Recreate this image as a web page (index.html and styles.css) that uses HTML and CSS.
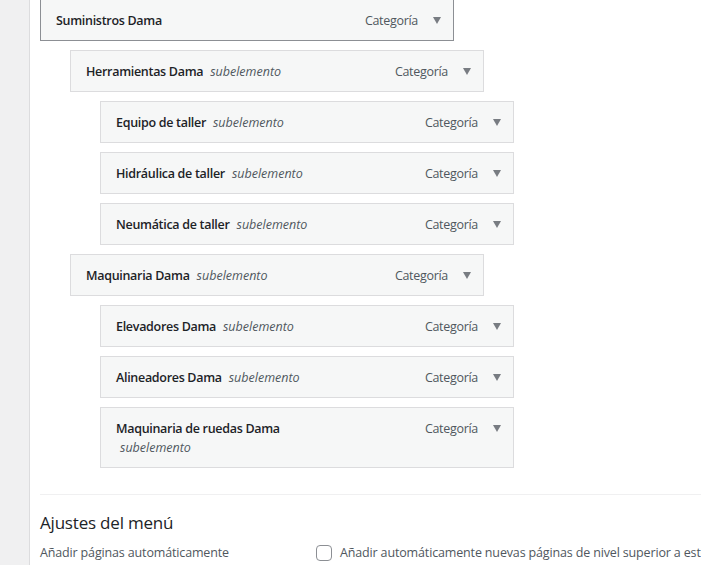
FILE: index.html
```html
<!doctype html>
<html lang="es">
  <head>
    <meta charset="UTF-8" />
    <meta name="viewport" content="width=device-width, initial-scale=1.0" />
    <title>Menús</title>
    <link rel="stylesheet" href="styles.css">
  </head>
  <body>
    <div class="page">
      <div class="sidebar"></div>

      <div class="menu-edit">
        <ul class="menu">
          <li class="menu-item depth-0 active">
            <div class="handle">
              <span class="item-title">Suministros Dama</span>
              <span class="item-controls"><span class="item-type">Categoría</span><span class="arrow"></span></span>
            </div>
          </li>
          <li class="menu-item depth-1">
            <div class="handle">
              <span class="item-title">Herramientas Dama <span class="is-sub">subelemento</span></span>
              <span class="item-controls"><span class="item-type">Categoría</span><span class="arrow"></span></span>
            </div>
          </li>
          <li class="menu-item depth-2">
            <div class="handle">
              <span class="item-title">Equipo de taller <span class="is-sub">subelemento</span></span>
              <span class="item-controls"><span class="item-type">Categoría</span><span class="arrow"></span></span>
            </div>
          </li>
          <li class="menu-item depth-2">
            <div class="handle">
              <span class="item-title">Hidráulica de taller <span class="is-sub">subelemento</span></span>
              <span class="item-controls"><span class="item-type">Categoría</span><span class="arrow"></span></span>
            </div>
          </li>
          <li class="menu-item depth-2">
            <div class="handle">
              <span class="item-title">Neumática de taller <span class="is-sub">subelemento</span></span>
              <span class="item-controls"><span class="item-type">Categoría</span><span class="arrow"></span></span>
            </div>
          </li>
          <li class="menu-item depth-1">
            <div class="handle">
              <span class="item-title">Maquinaria Dama <span class="is-sub">subelemento</span></span>
              <span class="item-controls"><span class="item-type">Categoría</span><span class="arrow"></span></span>
            </div>
          </li>
          <li class="menu-item depth-2">
            <div class="handle">
              <span class="item-title">Elevadores Dama <span class="is-sub">subelemento</span></span>
              <span class="item-controls"><span class="item-type">Categoría</span><span class="arrow"></span></span>
            </div>
          </li>
          <li class="menu-item depth-2">
            <div class="handle">
              <span class="item-title">Alineadores Dama <span class="is-sub">subelemento</span></span>
              <span class="item-controls"><span class="item-type">Categoría</span><span class="arrow"></span></span>
            </div>
          </li>
          <li class="menu-item depth-2">
            <div class="handle">
              <span class="item-title">Maquinaria de ruedas Dama <span class="is-sub">subelemento</span></span>
              <span class="item-controls"><span class="item-type">Categoría</span><span class="arrow"></span></span>
            </div>
          </li>
        </ul>

        <div class="menu-settings">
          <h3>Ajustes del menú</h3>
          <div class="settings-row">
            <span class="settings-label">Añadir páginas automáticamente</span>
            <label class="settings-check">
              <input type="checkbox" />
              Añadir automáticamente nuevas páginas de nivel superior a este menú
            </label>
          </div>
        </div>
      </div>
    </div>
  </body>
</html>
```

FILE: styles.css
```css
html,
body {
  margin: 0;
  height: 100%;
  overflow: hidden;
  background: #fff;
}

body {
  font-family: "Open Sans", "Noto Sans", sans-serif;
  font-size: 12.5px;
  letter-spacing: -0.3px;
  color: #1d2327;
}

.page {
  display: flex;
  height: 100%;
}

.sidebar {
  flex: 0 0 29px;
  background: #f0f0f1;
  border-right: 1px solid #dcdcde;
}

.menu-edit {
  flex: 1;
  padding-left: 10px;
  min-width: 0;
}

.menu {
  list-style: none;
  margin: -1px 0 0;
  padding: 0;
}

.menu-item {
  margin-bottom: 9px;
}

.depth-1 {
  padding-left: 30px;
}

.depth-2 {
  padding-left: 60px;
}

.handle {
  box-sizing: border-box;
  width: 414px;
  display: flex;
  align-items: flex-start;
  padding: 11px 15px 10px;
  line-height: 19px;
  background: #f6f7f7;
  border: 1px solid #dcdcde;
}

.active .handle {
  border-color: #8c8f94;
}

.item-title {
  max-width: 212px;
  font-weight: 600;
}

.is-sub {
  margin-left: 4px;
  font-weight: 400;
  font-style: italic;
  letter-spacing: 0;
  color: #50575e;
}

.item-controls {
  margin-left: auto;
  display: flex;
  align-items: center;
  color: #50575e;
}

.arrow {
  width: 0;
  height: 0;
  margin: 0 -3px 0 15px;
  border-left: 4.5px solid transparent;
  border-right: 4.5px solid transparent;
  border-top: 7px solid #787c82;
}

.menu-settings {
  margin-top: 26px;
  border-top: 1px solid #f0f0f1;
  width: 900px;
}

.menu-settings h3 {
  margin: 16px 0 10px;
  font-size: 17px;
  font-weight: 400;
  letter-spacing: -0.2px;
}

.settings-row {
  display: flex;
  align-items: center;
  letter-spacing: -0.15px;
  color: #50575e;
}

.settings-label {
  width: 276px;
}

.settings-check {
  display: flex;
  align-items: center;
  white-space: nowrap;
}

.settings-check input {
  appearance: none;
  box-sizing: border-box;
  width: 16px;
  height: 16px;
  margin: 0 8px 0 0;
  border: 1px solid #8c8f94;
  border-radius: 4px;
  background: #fff;
}
```
